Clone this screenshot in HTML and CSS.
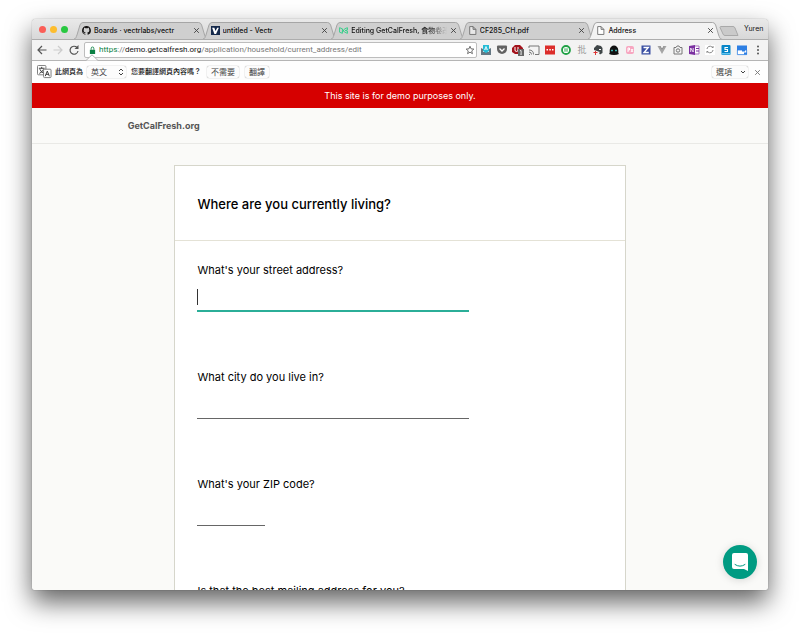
FILE: index.html
```html
<!DOCTYPE html>
<html lang="en">
<head>
<meta charset="utf-8">
<meta name="viewport" content="width=device-width, initial-scale=1">
<title>Address</title>
<link rel="stylesheet" href="styles.css">
</head>
<body>
<div class="window">
  <div class="tabstrip">
    <div class="lights">
      <button class="light red" aria-label="Close"></button>
      <button class="light yellow" aria-label="Minimize"></button>
      <button class="light green" aria-label="Zoom"></button>
    </div>
    <div class="tabs">
      <div class="tab">
        <svg class="shape" viewBox="0 0 134 17" preserveAspectRatio="none"><path d="M0 17C2 17 2 15 3 13L6 3Q7 .5 9 .5H125Q127 .5 128 3L131 13C132 15 132 17 134 17"/></svg>
        <svg class="fav" viewBox="0 0 16 16"><path fill="#171515" d="M8 0C3.6 0 0 3.6 0 8c0 3.5 2.300 6.500 5.500 7.600.4.100.5-.2.500-.4v-1.500c-2.200.5-2.700-.9-2.700-.9-.4-.9-.9-1.200-.9-1.200-.7-.5.100-.5.100-.5.800.1 1.200.8 1.200.8.700 1.200 1.900.9 2.300.7.100-.5.300-.9.500-1.100-1.800-.2-3.600-.9-3.600-4 0-.9.300-1.600.8-2.100-.1-.2-.4-1 .1-2.100 0 0 .7-.2 2.200.8a7.500 7.500 0 0 1 4 0c1.500-1 2.200-.8 2.200-.8.400 1.100.2 1.900.1 2.100.5.600.8 1.300.8 2.100 0 3.100-1.900 3.700-3.700 3.900.3.300.6.800.6 1.500v2.200c0 .2.100.5.600.4A8 8 0 0 0 8 0z"/></svg>
        <span class="name">Boards · vectrlabs/vectr</span><button class="close" aria-label="Close tab"><svg viewBox="0 0 6 6"><path d="M1 1l4 4M5 1L1 5"/></svg></button>
      </div>
      <div class="tab">
        <svg class="shape" viewBox="0 0 134 17" preserveAspectRatio="none"><path d="M0 17C2 17 2 15 3 13L6 3Q7 .5 9 .5H125Q127 .5 128 3L131 13C132 15 132 17 134 17"/></svg>
        <svg class="fav" viewBox="0 0 16 16"><path fill="#15294b" d="M0 0h16v16H0z"/><path fill="#fff" d="M2 3h4l2 6 3-6h3L9 14H6z"/></svg>
        <span class="name">untitled - Vectr</span><button class="close" aria-label="Close tab"><svg viewBox="0 0 6 6"><path d="M1 1l4 4M5 1L1 5"/></svg></button>
      </div>
      <div class="tab">
        <svg class="shape" viewBox="0 0 134 17" preserveAspectRatio="none"><path d="M0 17C2 17 2 15 3 13L6 3Q7 .5 9 .5H125Q127 .5 128 3L131 13C132 15 132 17 134 17"/></svg>
        <svg class="fav" viewBox="0 0 16 16"><path fill="none" stroke="#25cf83" stroke-width="1.500" d="M1 3l5 2v8l-5-2zM6 6l4 5 5 2V9l-4-1 4-1V3l-5 2-4 6"/></svg>
        <span class="name fade">Editing GetCalFresh, 食物卷改</span><button class="close" aria-label="Close tab"><svg viewBox="0 0 6 6"><path d="M1 1l4 4M5 1L1 5"/></svg></button>
      </div>
      <div class="tab">
        <svg class="shape" viewBox="0 0 134 17" preserveAspectRatio="none"><path d="M0 17C2 17 2 15 3 13L6 3Q7 .5 9 .5H125Q127 .5 128 3L131 13C132 15 132 17 134 17"/></svg>
        <svg class="fav" viewBox="0 0 16 16"><path fill="#e8e8e8" stroke="#666" stroke-width="1.500" d="M3 1h6l5 5v9H3zM9 1v5h5"/></svg>
        <span class="name">CF285_CH.pdf</span><button class="close" aria-label="Close tab"><svg viewBox="0 0 6 6"><path d="M1 1l4 4M5 1L1 5"/></svg></button>
      </div>
      <div class="tab active">
        <svg class="shape" viewBox="0 0 134 17" preserveAspectRatio="none"><path d="M0 17C2 17 2 15 3 13L6 3Q7 .5 9 .5H125Q127 .5 128 3L131 13C132 15 132 17 134 17"/></svg>
        <svg class="fav" viewBox="0 0 16 16"><path fill="#fff" stroke="#666" stroke-width="1.500" d="M3 1h6l5 5v9H3zM9 1v5h5"/></svg>
        <span class="name">Address</span><button class="close" aria-label="Close tab"><svg viewBox="0 0 6 6"><path d="M1 1l4 4M5 1L1 5"/></svg></button>
      </div>
    </div>
    <button class="newtab" aria-label="New tab"><svg viewBox="0 0 20 10"><path fill="#cacaca" stroke="#a9a9a9" d="M2 .5h12q1.500 0 2 1.500l3 7.500H6Q4.500 9.500 4 8L1 1.500Q1 .5 2 .5z"/></svg></button>
    <span class="profile">Yuren</span>
  </div>

  <div class="toolbar">
    <div class="nav">
      <button aria-label="Back"><svg viewBox="0 0 12 12"><path fill="none" stroke="#555" stroke-width="1.200" d="M10.500 6H2M6 2L2 6l4 4"/></svg></button>
      <button aria-label="Forward"><svg viewBox="0 0 12 12"><path fill="none" stroke="#ccc" stroke-width="1.200" d="M1.500 6H10M6 2l4 4-4 4"/></svg></button>
      <button aria-label="Reload"><svg viewBox="0 0 12 12"><path fill="none" stroke="#555" stroke-width="1.200" d="M9 3.500A4 4 0 1 0 10 7"/><path fill="#555" d="M10.500 1v4h-4z"/></svg></button>
    </div>
    <div class="omnibox">
      <svg class="lock" viewBox="0 0 8 10"><path fill="#0b8043" d="M1 4h6v5H1z"/><path fill="none" stroke="#0b8043" d="M2.500 4V2.500a1.500 1.500 0 0 1 3 0V4"/></svg>
      <div class="url"><span class="scheme">https</span>://<span class="host">demo.getcalfresh.org</span>/application/household/current_address/edit</div>
      <button class="star" aria-label="Bookmark"><svg viewBox="0 0 12 12"><path fill="none" stroke="#555" d="M6 1.500l1.300 3.100 3.300.3-2.500 2.200.8 3.300L6 8.600l-2.900 1.800.8-3.300L1.400 4.900l3.300-.3z"/></svg></button>
    </div>
    <div class="extensions">
      <svg viewBox="0 0 12 12"><path fill="#647783" d="M1 4l2 1v3h6V5l2-1v7H1z"/><path fill="#24bcd6" d="M3 1h6v6L6 9 3 7z"/><path stroke="#fff" fill="none" stroke-width=".8" d="M4.500 6L6 2.500 7.500 6M5 5h2"/></svg>
      <svg viewBox="0 0 12 12"><path fill="#626262" d="M2 1.500h8q1 0 1 1V5a5 5 0 0 1-10 0V2.500q0-1 1-1z"/><path fill="none" stroke="#fff" stroke-width="1.300" d="M3.500 4.500L6 7l2.500-2.500"/></svg>
      <svg viewBox="0 0 12 12"><path fill="#a3121b" d="M3 1h5l3 3v3l-3 3H3L0 8V4z"/><path fill="none" stroke="#fff" d="M3 3v3q0 1.500 1.500 1.500T6 6V3"/><path fill="#666" d="M6 5h6v7H6z"/><path stroke="#fff" d="M8 7l1-.5V11"/></svg>
      <svg viewBox="0 0 12 12"><path fill="none" stroke="#777" d="M1 4V2h10v8.500H7M1 10.500h1M1 8q2.500 0 2.500 2.500M1 6q4.500 0 4.500 4.500"/></svg>
      <svg viewBox="0 0 12 12"><path fill="#dc2d2b" d="M1 1.500h10v9H1z"/><path fill="#fff" d="M2.500 5H4v1.500H2.500zM5.300 5h1.500v1.500H5.300zM8 5h1.500v1.500H8z"/></svg>
      <svg viewBox="0 0 12 12"><circle cx="6" cy="6" r="4" fill="#fff" stroke="#1fa145" stroke-width="1.800"/><path fill="#1fa145" d="M4.500 4.200h1v3.600h-1zM6.500 4.200h1v3.600h-1z"/></svg>
      <span class="glyph">批</span>
      <svg viewBox="0 0 12 12"><path fill="#3f4648" d="M2 4l3-3 4 1 1.500 2v5L8 10.500 7 9l1-1-3-1-3-1z"/><path fill="#fff" d="M7 5h2v1H7z"/><path stroke="#d33" d="M1.500 8.500h4M3.500 7v4"/></svg>
      <svg viewBox="0 0 12 12"><path fill="#111" d="M1 10q1-1 .7-4C2 3 4 1.500 6 1.500s4 1.500 4.300 4.500q-.3 3 .7 4-2 1-5 1t-5-1z"/><path stroke="#39b3b0" stroke-width="1.500" d="M3 6.500h2M7 6.500h2"/></svg>
      <svg viewBox="0 0 12 12"><rect x="2" y="2" width="8" height="8" rx="2" fill="#f7a6c0"/><path fill="none" stroke="#fff" d="M4 8V4h1.500v2H4M7 5l2 3M9 5L7 8"/></svg>
      <svg viewBox="0 0 12 12"><path fill="#3a4fa2" d="M1.500 1.500h9v9h-9z"/><path fill="none" stroke="#fff" stroke-width="1.400" d="M3.500 3.500h4.800L4 8.500h4.800"/></svg>
      <svg viewBox="0 0 12 12"><path fill="#a5a5a5" d="M1.500 2H4l2 4 2-4h2.500L6 10z"/><path stroke="#777" stroke-width=".8" fill="none" d="M4 2l2 3.500L8 2"/></svg>
      <svg viewBox="0 0 12 12"><path fill="none" stroke="#777" d="M2 3.500h2l1-1.500h2l1 1.500h2V10H2z"/><circle cx="6" cy="6.500" r="1.700" fill="none" stroke="#777"/></svg>
      <svg viewBox="0 0 12 12"><path fill="#fff" stroke="#a675be" d="M6 2h5v8H6z"/><path stroke="#7b2fa0" d="M8 4.500h3M8 7h3"/><path fill="#7b2fa0" d="M1 2l6-1v10l-6-1z"/><path fill="none" stroke="#fff" stroke-width=".8" d="M2.700 8V4l2.500 4V4"/></svg>
      <svg viewBox="0 0 12 12"><path fill="#fff" d="M1 1h10v10H1z"/><path fill="none" stroke="#888" d="M3 5a3 3 0 0 1 5-2l1 1V2M9 6a3 3 0 0 1-5 2L3 7v2"/></svg>
      <svg viewBox="0 0 12 12"><rect x="1.500" y="1" width="9" height="10" rx="1" fill="#0786c8"/><path fill="#65c4ed" d="M1.500 9h9v1.500h-9z"/><path fill="none" stroke="#fff" stroke-width="1.100" d="M8 3.500H5v2h2.500v2h-3"/></svg>
      <svg viewBox="0 0 12 12"><path fill="#2d7fe3" d="M1 1.500h10v5H1z"/><path fill="#fff" stroke="#2d7fe3" stroke-width=".8" d="M1.400 6h9.200v4.600H1.400z"/><path fill="#2d7fe3" d="M6 6h3v1.500H6zM8 8.500h3v2H8z"/></svg>
      <svg viewBox="0 0 12 12"><circle cx="6" cy="2.500" r="1" fill="#555"/><circle cx="6" cy="6" r="1" fill="#555"/><circle cx="6" cy="9.500" r="1" fill="#555"/></svg>
    </div>
  </div>

  <div class="translate" lang="zh-Hant">
    <svg class="pointer" viewBox="0 0 12 7"><path fill="#fefefe" stroke="#b5b5b5" d="M0 6.500L6 .8l6 5.700"/></svg>
    <svg class="trans-icon" viewBox="0 0 16 15"><rect x=".5" y=".5" width="9" height="10" rx="1" fill="#fff" stroke="#777"/><path fill="none" stroke="#333" d="M2 3.500h6M5 2v1.500M3 4.500q1 3 4.500 4.500M7 4.500Q6 7.500 2.500 9"/><rect x="7" y="4.500" width="8" height="9" rx="1" fill="#fff" stroke="#777"/><path fill="none" stroke="#333" d="M8.800 12L11 6.500l2.200 5.500M9.500 10h3"/></svg>
    <label for="lang">此網頁為</label>
    <div class="picker lang"><select id="lang"><option>英文</option></select><svg viewBox="0 0 6 8"><path d="M1 3l2-2 2 2M1 5l2 2 2-2"/></svg></div>
    <span class="ask">您要翻譯網頁內容嗎？</span>
    <button class="pill">不需要</button>
    <button class="pill">翻譯</button>
    <div class="picker opts"><select aria-label="選項"><option>選項</option></select><svg viewBox="0 0 6 8"><path d="M1 3l2 2 2-2"/></svg></div>
    <button class="close dismiss" aria-label="關閉"><svg viewBox="0 0 6 6"><path d="M1 1l4 4M5 1L1 5"/></svg></button>
  </div>

  <div class="page">
    <div class="demo">This site is for demo purposes only.</div>
    <header class="site"><a href="#">GetCalFresh.org</a></header>
    <main class="card">
      <h1>Where are you currently living?</h1>
      <form>
        <div class="field"><label for="street">What's your street address?</label><div class="focused"><input id="street" type="text"></div></div>
        <div class="field"><label for="city">What city do you live in?</label><input id="city" type="text"></div>
        <div class="field"><label for="zip">What's your ZIP code?</label><input id="zip" class="short" type="text"></div>
        <div class="field"><label for="mailing">Is that the best mailing address for you?</label><input id="mailing" type="text"></div>
      </form>
    </main>
    <button class="chat" aria-label="Chat"><svg viewBox="0 0 18 20"><path fill="#fff" d="M3 1h12q2 0 2 2v16l-4-2H3q-2 0-2-2V3q0-2 2-2z"/><path fill="none" stroke="#009b82" stroke-linecap="round" d="M4 12.500q5 3.500 10 0"/></svg></button>
  </div>
</div>
</body>
</html>
```
FILE: styles.css
```css
* { box-sizing: border-box; }
body {
  margin: 0;
  height: 100vh;
  padding: 19px 32px 46px;
  background: #fff;
  font-family: Inter, "Noto Sans CJK TC", sans-serif;
  color: #111;
  overflow: hidden;
}
button, input, select { font: inherit; color: inherit; margin: 0; }
button { padding: 0; border: 0; background: none; }
svg { display: block; }

.window {
  height: 100%;
  display: flex;
  flex-direction: column;
  overflow: hidden;
  border-radius: 4px 4px 2px 2px;
  background: #fafaf8;
  box-shadow: 0 0 1px rgba(0, 0, 0, .5), 0 12px 26px rgba(0, 0, 0, .62);
}

.tabstrip {
  flex: none;
  display: flex;
  align-items: flex-end;
  height: 21px;
  background: linear-gradient(#e9e9e9, #d8d8d8);
  border-bottom: 1px solid #adadad;
  font-size: 7px;
}
.lights { display: flex; gap: 4px; width: 42px; padding: 0 0 6px 7px; }
.light { width: 7px; height: 7px; border-radius: 50%; }
.red { background: #fb5e57; }
.yellow { background: #fdbd2e; }
.green { background: #28c840; }
.tabs { flex: 1; display: flex; min-width: 0; }
.tab {
  position: relative;
  flex: 1;
  min-width: 0;
  height: 17px;
  margin-right: -5px;
  padding: 0 7px 0 8px;
  display: flex;
  align-items: center;
  gap: 3px;
}
.tab:last-child { margin-right: -3px; }
.tab > * { position: relative; }
.tab .shape { position: absolute; inset: 0; width: 100%; height: 100%; }
.shape path { fill: #cfcfcf; stroke: #a6a6a6; }
.active { z-index: 1; margin-bottom: -1px; }
.active .shape path { fill: #f3f3f3; }
.fav { flex: none; width: 9px; height: 9px; }
.name { flex: 1; min-width: 0; overflow: hidden; white-space: nowrap; font-weight: 500; line-height: 10px; }
.fade { -webkit-mask-image: linear-gradient(90deg, #000 80%, transparent); mask-image: linear-gradient(90deg, #000 80%, transparent); }
.close { flex: none; width: 8px; height: 8px; }
.close svg { width: 7px; height: 7px; }
.close path { fill: none; stroke: #444; stroke-width: .8; }
.newtab { flex: none; width: 20px; padding-bottom: 3px; }
.profile { flex: none; width: 29px; padding: 0 6px 5px 5px; line-height: 10px; }

.toolbar {
  flex: none;
  display: flex;
  align-items: center;
  height: 21px;
  padding: 0 4px;
  background: #f3f3f3;
  border-bottom: 1px solid #b5b5b5;
}
.nav { display: flex; gap: 4px; width: 48px; }
.nav svg { width: 12px; height: 12px; }
.omnibox {
  flex: 1;
  min-width: 0;
  display: flex;
  align-items: center;
  height: 16px;
  padding: 0 1px 0 4px;
  border: 1px solid #bdbdbd;
  border-radius: 2px;
  background: #fff;
}
.lock { width: 7px; height: 9px; margin-right: 3px; }
.url { flex: 1; min-width: 0; overflow: hidden; white-space: nowrap; font-size: 8px; line-height: 12px; color: #777; font-family: Roboto, sans-serif; }
.scheme { color: #0b8043; }
.host { color: #111; }
.star svg { width: 10px; height: 10px; }
.extensions { display: flex; gap: 4px; padding-left: 3px; }
.extensions svg { width: 12px; height: 12px; }
.glyph { width: 12px; font-size: 9px; line-height: 12px; text-align: center; color: #999; }

.translate {
  position: relative;
  flex: none;
  display: flex;
  align-items: center;
  height: 22px;
  padding: 0 6px 0 5px;
  background: #fefefe;
  font-size: 7px;
  font-weight: 500;
  line-height: 12px;
}
.pointer { position: absolute; left: 54px; top: -7px; width: 12px; height: 7px; }
.trans-icon { width: 15px; height: 14px; margin-right: 3px; }
.picker, .pill { height: 12px; border-radius: 2px; background: #fcfcfc; box-shadow: 0 0 1px rgba(0, 0, 0, .5); font-size: 8px; font-weight: 400; color: #444; }
.picker { position: relative; }
.picker select { appearance: none; width: 100%; height: 12px; padding: 0 4px; border: 0; background: none; line-height: 12px; display: block; }
.picker svg { position: absolute; right: 2px; top: 2px; width: 6px; height: 8px; pointer-events: none; }
.picker path { fill: none; stroke: #444; }
.lang { width: 39px; margin: 0 5px 0 4px; }
.ask { margin-right: 6px; }
.pill { padding: 0 4px; margin-right: 6px; line-height: 12px; }
.opts { width: 36px; margin-left: auto; }
.dismiss { margin-left: 6px; }
.dismiss path { stroke: #777; }

.page { position: relative; flex: 1; min-height: 0; overflow: hidden; }
.demo { height: 25px; background: #d60000; color: #fff; font-size: 9px; line-height: 25px; text-align: center; }
.site { height: 36px; padding: 0 13%; border-bottom: 1px solid #e9e9e6; font-size: 9px; font-weight: 700; line-height: 35px; }
.site a { color: #555; text-decoration: none; }
.card { width: 61.3%; margin: 21px auto 0; border: 1px solid #d6d6cb; background: #fff; }
h1 { margin: 0; padding: 28px 22px 26px; border-bottom: 1px solid #e4e2d6; color: #000; font-size: 13px; font-weight: 500; line-height: 20px; }
form { padding: 21px 22px 0; }
.field { height: 107px; }
.field label { display: block; color: #000; font-size: 11px; line-height: 16px; }
.field input { display: block; width: 67%; height: 23px; margin-top: 11px; padding: 0; border: 0; border-bottom: 1px solid #666; border-radius: 0; outline: 0; background: none; font-size: 10px; }
.field .short { width: 68px; }
.focused { position: relative; }
.focused input { border-bottom: 2px solid #2bae98; }
.focused::before { content: ""; position: absolute; left: 0; top: 0; width: 1px; height: 16px; background: #333; }
.chat {
  position: absolute;
  right: 11px;
  bottom: 11px;
  width: 34px;
  height: 34px;
  border-radius: 50%;
  background: #009b82;
  box-shadow: 0 1px 8px rgba(0, 0, 0, .15);
}
.chat svg { width: 18px; height: 20px; margin: 0 auto; }
```
